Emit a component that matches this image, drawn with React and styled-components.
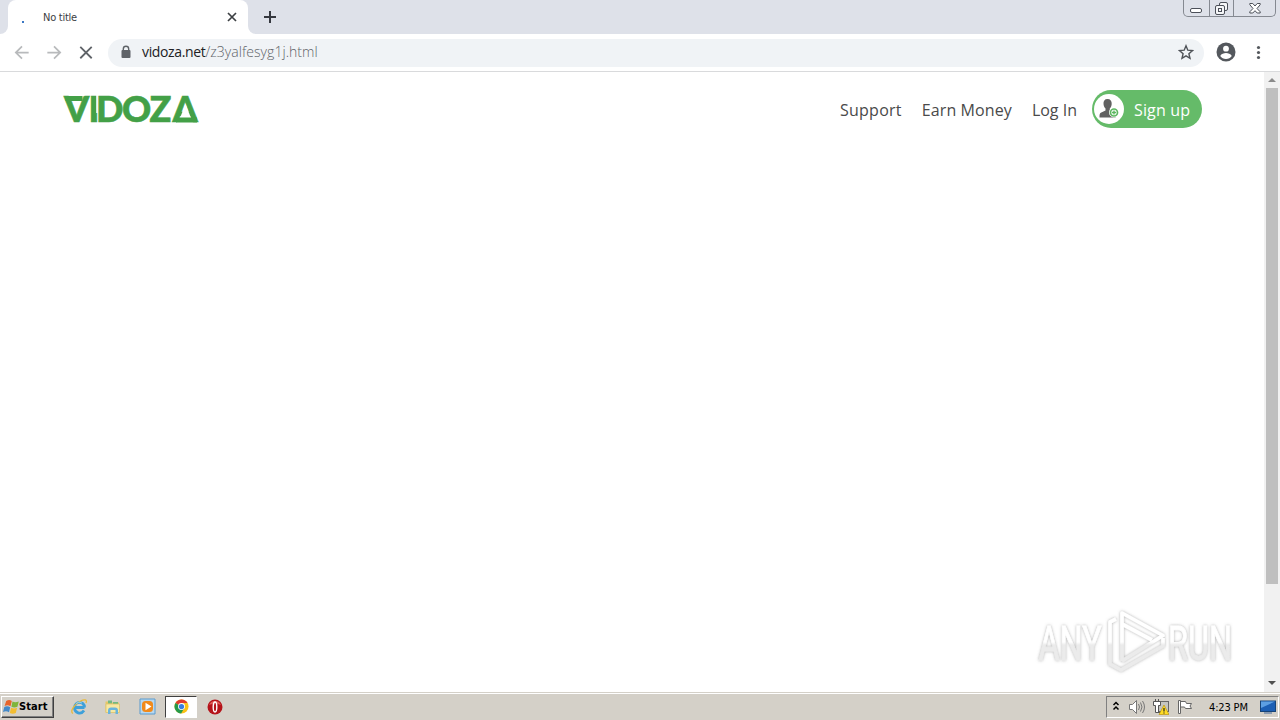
import React from 'react';
import styled, { createGlobalStyle } from 'styled-components';

const GlobalStyle = createGlobalStyle`
    * {
        box-sizing: border-box;
    }

    body {
        margin: 0;
        overflow: hidden;
        background: #fff;
    }

    svg {
        display: block;
        flex-shrink: 0;
    }
`;

const Desktop = styled.div`
    display: flex;
    flex-direction: column;
    width: 1280px;
    height: 720px;
    overflow: hidden;
    background: #fff;
`;

// Browser window
const TabStrip = styled.header`
    display: flex;
    height: 34px;
    background: #dee1e9;
`;

const TabEdge = styled.div`
    width: 8px;
    background: #fff;

    &::before {
        content: '';
        display: block;
        height: 34px;
        background: #dee1e9;
        border-radius: ${({ $side }) => ($side === 'left' ? '0 0 8px 0' : '0 0 0 8px')};
    }
`;

const Tab = styled.div`
    display: flex;
    align-items: center;
    width: 240px;
    height: 34px;
    padding: 0 10px 0 14px;
    background: #fff;
    border-radius: 8px 8px 0 0;
`;

const Spinner = styled.span`
    width: 2px;
    height: 2px;
    margin: 9px 19px 0 0;
    background: #3b78c4;
`;

const TabTitle = styled.span`
    flex: 1;
    font: 11px 'DejaVu Sans Condensed', 'DejaVu Sans', sans-serif;
    font-stretch: condensed;
    letter-spacing: -0.25px;
    color: #3c4043;
`;

const NewTab = styled.div`
    display: flex;
    flex: 1;
    align-items: center;
    padding-left: 7px;
`;

const WindowButtons = styled.div`
    display: flex;
    width: 93px;
    height: 17px;
    margin-right: 4px;
    border: 1px solid #858991;
    border-top: none;
    border-radius: 0 0 5px 5px;
`;

const WindowButton = styled.div`
    display: flex;
    align-items: center;
    justify-content: center;
    width: ${({ $width }) => $width}px;

    & + & {
        border-left: 1px solid #858991;
    }
`;

const Toolbar = styled.div`
    display: flex;
    align-items: center;
    height: 38px;
    padding: 0 12px;
    border-bottom: 1px solid #d9dadc;
    background: #fff;
`;

const NavButtons = styled.div`
    display: flex;
    gap: 12px;
    margin-right: 12px;
`;

const AddressBar = styled.div`
    display: flex;
    flex: 1;
    align-items: center;
    height: 28px;
    margin-right: 12px;
    padding: 0 10px 0 12px;
    border-radius: 14px;
    background: #f0f3f6;
`;

const Url = styled.div`
    flex: 1;
    margin: -2px 0 0 10px;
    font: 300 14px 'Open Sans', sans-serif;
    letter-spacing: 0.05px;
    color: #5f6368;

    b {
        font-weight: 400;
        letter-spacing: -0.35px;
        color: #202124;
    }
`;

const ToolbarMenu = styled.div`
    display: flex;
    align-items: center;
    gap: 12px;
`;

// Page
const Viewport = styled.div`
    display: flex;
    height: 620px;
`;

const Page = styled.main`
    position: relative;
    flex: 1;
    background: #fff;
`;

const SiteHeader = styled.div`
    display: flex;
    align-items: center;
    height: 74px;
    padding: 0 62px 0 63px;
`;

const SiteNav = styled.nav`
    display: flex;
    flex: 1;
    align-items: center;
    justify-content: flex-end;
    gap: 20px;
    margin: 2px 15px 0 0;
`;

const NavLink = styled.a`
    font: 16px/24px 'Open Sans', sans-serif;
    letter-spacing: ${({ $spacing }) => $spacing}px;
    color: #4a4a4a;
`;

const SignUp = styled.a`
    display: flex;
    align-items: center;
    width: 110px;
    height: 38px;
    padding-left: 2px;
    border-radius: 19px;
    background: #65bb69;
    color: #fff;
`;

const SignUpLabel = styled.span`
    margin-top: 2px;
    font: 16px/24px 'Open Sans', sans-serif;
    letter-spacing: 0.15px;
`;

const Avatar = styled.span`
    display: flex;
    align-items: center;
    justify-content: center;
    width: 30px;
    height: 30px;
    margin-right: 10px;
    border-radius: 50%;
    background: #fff;
`;

const Watermark = styled.div`
    position: absolute;
    right: 26px;
    bottom: 14px;
`;

const Scrollbar = styled.div`
    display: flex;
    flex-direction: column;
    align-items: center;
    justify-content: space-between;
    width: 16px;
    background: #f1f1f1;
`;

const ScrollTrack = styled.div`
    flex: 1;
    width: 12px;
`;

const ScrollThumb = styled.div`
    height: 496px;
    background: #bfbfbf;
`;

const ScrollArrow = styled.div`
    display: flex;
    align-items: center;
    justify-content: center;
    width: 16px;
    height: 16px;
    margin-bottom: ${({ $lift }) => $lift || 0}px;
`;

// Taskbar
const Taskbar = styled.footer`
    display: flex;
    align-items: center;
    height: 28px;
    padding: 2px 1px 2px;
    border-top: 1px solid #d4d0c8;
    background: #d4d0c8;
    box-shadow: inset 0 1px #fff;
`;

const StartButton = styled.div`
    display: flex;
    align-items: center;
    width: 53px;
    height: 22px;
    padding-left: 1px;
    margin-right: 9px;
    border: 1px solid;
    border-color: #fff #404040 #404040 #fff;
    box-shadow: inset -1px -1px #808080;
    font: bold 11px 'DejaVu Sans Condensed', 'DejaVu Sans', sans-serif;
    font-stretch: condensed;
    letter-spacing: 0.1px;
    color: #000;
`;

const TaskItem = styled.div`
    display: flex;
    align-items: center;
    justify-content: center;
    width: 32px;
    height: 22px;
    margin-right: 2px;
    border: 1px solid;
    border-color: ${({ $active }) => ($active ? '#404040 #fff #fff #404040' : 'transparent')};
    background: ${({ $active }) => ($active ? '#fff' : 'none')};
`;

const Tray = styled.div`
    display: flex;
    align-items: center;
    width: 173px;
    height: 22px;
    margin-left: auto;
    padding: 0 2px 0 5px;
    border: 1px solid;
    border-color: #808080 #fff #fff #808080;
`;

const TrayIcons = styled.div`
    display: flex;
    align-items: center;
    gap: 8px;
`;

const Clock = styled.span`
    flex: 1;
    padding: 1px 0 0 16px;
    font: 11px 'DejaVu Sans Condensed', 'DejaVu Sans', sans-serif;
    font-stretch: condensed;
    letter-spacing: -0.15px;
    white-space: nowrap;
    color: #000;
`;

const VidozaLogo = () => (
    <svg width="150" height="56" viewBox="0 0 150 56">
        <g fill="#43a047" stroke="#43a047" strokeWidth="0.6" fontFamily="Lato, sans-serif" fontWeight="900" fontSize="36">
            <text x="1 25.5 33 59 86.5 109.500" y="41">
                VIDOZA
            </text>
        </g>
        <path d="M117 37l5.500-14 5.500 14z" fill="#fff" />
        <path d="M34 14v18" stroke="#fff" strokeWidth="1.500" />
        <path d="M2.500 17.500h17M113 39h21" stroke="#43a047" strokeWidth="5" />
    </svg>
);

const UserPlus = () => (
    <svg width="20" height="20" viewBox="0 0 20 20">
        <path
            d="M8.500 0C5.600 0 4.300 2 4.500 5c.2 2 1 3.600 2 4.600v2L1.800 13.700C.7 14.300.5 15.500.5 18.500h16v-4l-5.700-3v-1.900c1-1 1.700-2.600 1.900-4.600C12.900 2 11.400 0 8.500 0z"
            fill="#616161"
        />
        <circle cx="15" cy="13.500" r="5" fill="#fff" />
        <circle cx="15" cy="13.500" r="3.500" fill="#fff" stroke="#5cb860" strokeWidth="1.700" />
        <path d="M15 11.500v4M13 13.500h4" stroke="#5cb860" strokeWidth="1.400" />
    </svg>
);

const AnyRun = () => (
    <svg width="204" height="76" viewBox="0 0 204 76">
        <defs>
            <filter id="soft" x="-10%" y="-10%" width="120%" height="120%">
                <feDropShadow dx="0" dy="0" stdDeviation="1.700" floodColor="#777" floodOpacity="0.6" />
            </filter>
            <linearGradient id="fade" gradientUnits="userSpaceOnUse" x1="0" y1="10" x2="0" y2="70">
                <stop offset="0.5" stopColor="#fff" />
                <stop offset="0.55" stopColor="#ebebeb" />
            </linearGradient>
            <linearGradient id="fadeText" gradientUnits="userSpaceOnUse" x1="0" y1="-48" x2="0" y2="12">
                <stop offset="0.5" stopColor="#fff" />
                <stop offset="0.55" stopColor="#ebebeb" />
            </linearGradient>
        </defs>
        <g filter="url(#soft)">
            <g fill="url(#fadeText)" stroke="url(#fadeText)" strokeWidth="0.8" fontFamily="Roboto, sans-serif" fontSize="49">
                <text transform="translate(4.500 58) scale(.66 1)">ANY</text>
                <text transform="translate(134 58) scale(.66 1)">RUN</text>
            </g>
            <g fill="none" stroke="url(#fade)" strokeWidth="3.700" strokeLinejoin="round">
                <path d="M88 59V11l41 22.500-41 25.500" />
                <path d="M82 17l-6 3v42l11 6 42-24v-8M88 22l30 16" />
            </g>
        </g>
    </svg>
);

const WindowsFlag = () => (
    <svg width="16" height="16" viewBox="0 0 16 16">
        <path d="M3.200 2q3-2 5.600 0L7.500 7.300Q4.800 5.500 1.600 7z" fill="#e8642a" />
        <path d="M9.500 2.500q2.500 1.500 6.300 0l-1.400 5.200q-3 1.500-6 0z" fill="#7fb53c" />
        <path d="M1.300 8q3-1.500 5.900.3L6 13.300q-2.700-2-6-.3z" fill="#4489c8" />
        <path d="M8.100 8.700q3 1.500 6 0L12.800 14q-3 1.500-6 0z" fill="#f3bd31" />
    </svg>
);

const Explorer = () => (
    <svg width="18" height="18" viewBox="0 0 18 18">
        <path d="M14.500 9.500H5.200M14 12.500c-3 4.500-9.500 2.500-9.500-2.700C4.500 3 14.500 2.500 14.500 9.500" fill="none" stroke="#3da0da" strokeWidth="2.800" />
        <path d="M3 15.500C-.5 14 4 6 10.500 3c4-2 7-1.500 5.500 2" fill="none" stroke="#e9b93a" strokeWidth="1.300" />
        <path d="M6 5.500q3-2.500 6-.5" fill="none" stroke="#8bd2f5" />
    </svg>
);

const Folder = () => (
    <svg width="18" height="18" viewBox="0 0 18 18">
        <path d="M1.500 3.500h5l1 1h7.500v10H1.500z" fill="#e6c765" />
        <path d="M4 2.500h4v3H4zM9 4h5v3H9z" fill="#72b981" />
        <path d="M2 6h13.500v8.500H2z" fill="#f7e8a2" stroke="#dac06a" strokeWidth=".7" />
        <path d="M4 16v-3.500q0-3 3-3h4q3 0 3 3V16h-2.500v-4h-5v4z" fill="#69b4dc" />
    </svg>
);

const MediaPlayer = () => (
    <svg width="17" height="17" viewBox="0 0 17 17">
        <path d="M1 1h15v15H1z" fill="#b8d8ef" stroke="#5b9bce" />
        <rect x="3" y="3" width="11" height="11" rx="3.500" fill="#f18a1b" />
        <path d="M6.500 4.800v7.400l6-3.700z" fill="#fff" />
    </svg>
);

const Chrome = () => (
    <svg width="15" height="15" viewBox="0 0 16 16">
        <circle cx="8" cy="8" r="7.500" fill="#fbc116" />
        <path d="M8 8L1.500 4.250a7.500 7.500 0 0 1 13 0H8z" fill="#e23b2e" />
        <path d="M1.500 4.250A7.500 7.500 0 0 0 7.600 15.500L11 9.700 8 8z" fill="#269a4b" />
        <circle cx="8" cy="8" r="3.700" fill="#fff" />
        <circle cx="8" cy="8" r="2.800" fill="#3a7de0" />
    </svg>
);

const Opera = () => (
    <svg width="16" height="16" viewBox="0 0 16 16">
        <circle cx="8" cy="8" r="7.500" fill="#b5131a" />
        <path d="M2 6a6.500 6.500 0 0 1 12 0q-6-3-12 0" fill="#df5a56" />
        <ellipse cx="8" cy="8" rx="1.800" ry="5" fill="#b5131a" stroke="#fff" strokeWidth="1.400" />
    </svg>
);

const App = () => {
    return (
        <Desktop>
            <GlobalStyle />
            <TabStrip>
                <TabEdge $side="left" />
                <Tab>
                    <Spinner />
                    <TabTitle>No title</TabTitle>
                    <svg width="12" height="12" viewBox="0 0 12 12" stroke="#3c4043" strokeWidth="1.700">
                        <path d="M2 2l8 8M10 2l-8 8" />
                    </svg>
                </Tab>
                <TabEdge $side="right" />
                <NewTab>
                    <svg width="14" height="14" viewBox="0 0 14 14" stroke="#35383f" strokeWidth="2">
                        <path d="M7 1v12M1 7h12" />
                    </svg>
                </NewTab>
                <WindowButtons>
                    <WindowButton $width={25}>
                        <svg width="13" height="17" viewBox="0 0 13 17" fill="#fff" stroke="#4c5059">
                            <rect x=".5" y="8.500" width="11" height="4" rx="1.500" />
                        </svg>
                    </WindowButton>
                    <WindowButton $width={25}>
                        <svg width="14" height="15" viewBox="0 0 14 15" fill="#f5f6f8" stroke="#4c5059">
                            <rect x="4.500" y="1.500" width="8" height="8" rx="1.500" />
                            <rect x=".5" y="4.500" width="9" height="9" rx="1.500" />
                            <rect x="3.500" y="7.500" width="3" height="3" />
                        </svg>
                    </WindowButton>
                    <WindowButton $width={42}>
                        <svg width="12" height="11" viewBox="0 0 12 11" fill="#fff" stroke="#4c5059">
                            <path d="M.8.500h3L6 3 8.200.500h3v1.200L8 5.500l3.200 3.300V10h-3L6 7.700 3.800 10h-3V8.800L4 5.500.8 1.700z" />
                        </svg>
                    </WindowButton>
                </WindowButtons>
            </TabStrip>

            <Toolbar>
                <NavButtons>
                    <svg width="20" height="20" viewBox="0 0 20 21" fill="none" stroke="#b8babc" strokeWidth="1.800">
                        <path d="M17 10H4M10 3.500L3.500 10l6.500 6.500" />
                    </svg>
                    <svg width="20" height="20" viewBox="0 0 20 21" fill="none" stroke="#b8babc" strokeWidth="1.800">
                        <path d="M3 10h13M10 3.500l6.500 6.500-6.500 6.500" />
                    </svg>
                    <svg width="20" height="20" viewBox="0 0 20 21" fill="none" stroke="#5f6368" strokeWidth="1.900">
                        <path d="M4 4l12 12M16 4L4 16" />
                    </svg>
                </NavButtons>
                <AddressBar>
                    <svg width="12" height="16" viewBox="0 0 12 16">
                        <path d="M3.300 6V4a2.700 2.700 0 0 1 5.400 0v2" fill="none" stroke="#5f6368" strokeWidth="1.400" />
                        <rect x="1.500" y="5" width="9" height="8" rx="1" fill="#5f6368" />
                    </svg>
                    <Url>
                        <b>vidoza.net</b>/z3yalfesyg1j.html
                    </Url>
                    <svg width="16" height="18" viewBox="0 0 16 18" fill="none" stroke="#4f5358" strokeWidth="1.400">
                        <path d="M8 1.800l1.800 4.400 4.700.4-3.600 3.100 1.100 4.600L8 11.800l-4 2.500 1.100-4.600-3.600-3.100 4.700-.4z" />
                    </svg>
                </AddressBar>
                <ToolbarMenu>
                    <svg width="20" height="22" viewBox="0 0 20 22">
                        <circle cx="10" cy="10" r="9.500" fill="#54585d" />
                        <circle cx="10" cy="6.700" r="2.900" fill="#fff" />
                        <path d="M4.200 14c1.200-2 3.600-2.900 5.800-2.900s4.600.9 5.800 2.900A7 7 0 0 1 10 17a7 7 0 0 1-5.800-3z" fill="#fff" />
                    </svg>
                    <svg width="20" height="20" viewBox="0 0 20 20" fill="#54585d">
                        <circle cx="10.500" cy="4.500" r="1.600" />
                        <circle cx="10.500" cy="9.500" r="1.600" />
                        <circle cx="10.500" cy="14.500" r="1.600" />
                    </svg>
                </ToolbarMenu>
            </Toolbar>

            <Viewport>
                <Page>
                    <SiteHeader>
                        <VidozaLogo />
                        <SiteNav>
                            <NavLink $spacing={0.25}>Support</NavLink>
                            <NavLink $spacing={0.1}>Earn Money</NavLink>
                            <NavLink $spacing={0}>Log In</NavLink>
                        </SiteNav>
                        <SignUp>
                            <Avatar>
                                <UserPlus />
                            </Avatar>
                            <SignUpLabel>Sign up</SignUpLabel>
                        </SignUp>
                    </SiteHeader>
                    <Watermark>
                        <AnyRun />
                    </Watermark>
                </Page>
                <Scrollbar>
                    <ScrollArrow>
                        <svg width="8" height="4" viewBox="0 0 8 4">
                            <path d="M0 4l4-4 4 4z" fill="#8b8b8b" />
                        </svg>
                    </ScrollArrow>
                    <ScrollTrack>
                        <ScrollThumb />
                    </ScrollTrack>
                    <ScrollArrow $lift={1}>
                        <svg width="8" height="4" viewBox="0 0 8 4">
                            <path d="M0 0l4 4 4-4z" fill="#505050" />
                        </svg>
                    </ScrollArrow>
                </Scrollbar>
            </Viewport>

            <Taskbar>
                <StartButton>
                    <WindowsFlag />
                    Start
                </StartButton>
                <TaskItem>
                    <Explorer />
                </TaskItem>
                <TaskItem>
                    <Folder />
                </TaskItem>
                <TaskItem>
                    <MediaPlayer />
                </TaskItem>
                <TaskItem $active>
                    <Chrome />
                </TaskItem>
                <TaskItem>
                    <Opera />
                </TaskItem>
                <Tray>
                    <TrayIcons>
                        <svg width="8" height="14" viewBox="0 0 8 14" fill="none" stroke="#000" strokeWidth="1.500">
                            <path d="M1.500 5L4 2.500 6.500 5M1.500 9.500L4 7l2.500 2.500" />
                        </svg>
                        <svg width="17" height="16" viewBox="0 0 17 16" fill="none" stroke="#777">
                            <path d="M1.500 5.500h3l4-4v13l-4-4h-3z" fill="#fff" />
                            <path d="M10.500 5q2 3 0 6M12.500 3.500q3 4.500 0 9M14.500 2q4 6 0 12" />
                        </svg>
                        <svg width="16" height="16" viewBox="0 0 16 16">
                            <rect x="5.500" y="2.500" width="10" height="10" fill="#c5c5c0" stroke="#666" />
                            <path d="M.5 2.500h7v4h-2v7h-3v-7h-2z" fill="#fff" stroke="#555" />
                            <path d="M2.500 0v3M5.500 0v3M3 13.500h5" stroke="#555" />
                            <path d="M11 6l5 9.500H6z" fill="#ffdc24" stroke="#b38b00" strokeWidth=".6" />
                            <path d="M11 9v3.500M11 13.500v1" stroke="#222" strokeWidth="1.200" />
                        </svg>
                        <svg width="16" height="16" viewBox="0 0 16 16" fill="#fff" stroke="#666">
                            <path d="M1.500 1.500h2v13h-2zM3.500 2.500h5l1 2h5l-1.500 2.500 1.500 2.500h-6l-1-1.500h-4z" />
                        </svg>
                    </TrayIcons>
                    <Clock>4:23 PM</Clock>
                    <svg width="16" height="14" viewBox="0 0 16 14">
                        <rect x=".5" y="1" width="15" height="10.500" fill="#1c5fb4" stroke="#174478" />
                        <path d="M1 1.500h14L1 8z" fill="#5d9fe2" />
                        <path d="M4 13h8" stroke="#45699a" />
                    </svg>
                </Tray>
            </Taskbar>
        </Desktop>
    );
};

export default App;
